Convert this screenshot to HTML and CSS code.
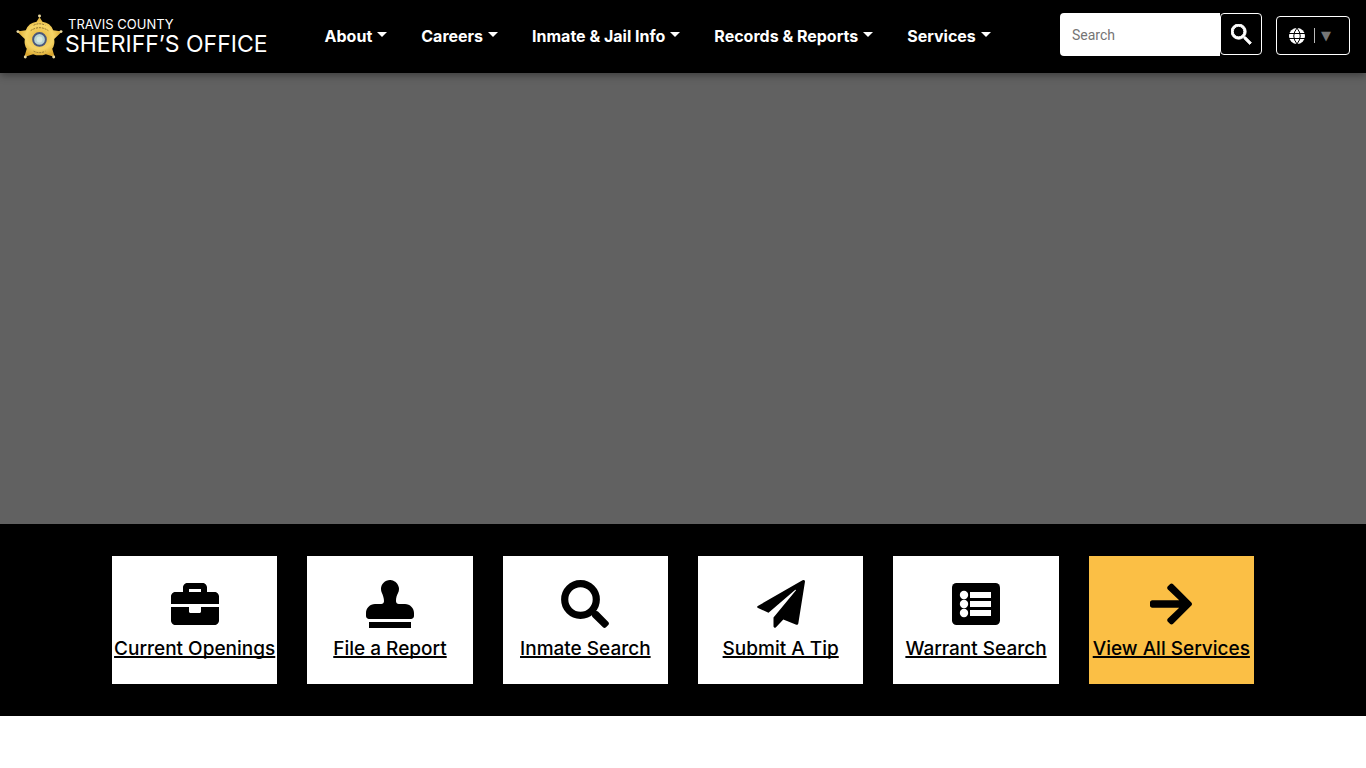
FILE: index.html
```html
<!DOCTYPE html>
<html lang="en">
<head>
  <meta charset="UTF-8">
  <title>Travis County Sheriff's Office</title>
  <meta name="viewport" content="width=device-width, initial-scale=1.0">
  <link rel="stylesheet" href="styles.css">
</head>
<body>
  <header class="site-header">
    <a href="#" class="brand">
      <svg class="badge" viewBox="0 0 48 48" aria-hidden="true">
        <defs>
          <radialGradient id="gold">
            <stop offset="0" stop-color="#e5b43a"/>
            <stop offset="0.6" stop-color="#f6d566"/>
            <stop offset="1" stop-color="#d9a62e"/>
          </radialGradient>
        </defs>
        <path fill="url(#gold)" d="M24 4l3 5q8 1 11 8.500l9 1.500-8 7.500q1 6-2 10l2.500 8.500-9-3q-6.500 2.500-13 0l-9 3L11 36.500q-3-4-2-10L1 19l9-1.500Q13 10 21 9z"/>
        <g fill="#ead9a0">
          <circle cx="24" cy="3" r="1.500"/><circle cx="46" cy="19" r="1.500"/><circle cx="38.500" cy="45" r="1.500"/>
          <circle cx="9.500" cy="45" r="1.500"/><circle cx="2" cy="19" r="1.500"/>
        </g>
        <path d="M18 12.500q6-3 12 0M15 18q9-6 18 0M18 39q6 3 12 0" fill="none" stroke="#8a7030" stroke-dasharray="2 1"/>
        <circle cx="24" cy="27" r="6.500" fill="#b8d4d2" stroke="#4a587c" stroke-width="2"/>
        <circle cx="24" cy="27" r="3" fill="#d8e8de"/>
      </svg>
      <span class="brand-text">
        <span class="brand-county">TRAVIS COUNTY</span>
        <span class="brand-office">SHERIFF’S OFFICE</span>
      </span>
    </a>

    <nav class="main-nav">
      <a href="#" class="nav-link">About</a>
      <a href="#" class="nav-link">Careers</a>
      <a href="#" class="nav-link">Inmate &amp; Jail Info</a>
      <a href="#" class="nav-link">Records &amp; Reports</a>
      <a href="#" class="nav-link">Services</a>
    </nav>

    <form class="search">
      <input type="search" class="search-input" placeholder="Search" aria-label="Search">
      <button type="submit" class="search-button" aria-label="Submit search">
        <svg viewBox="3 3 18 18" aria-hidden="true"><path d="M15.500 14h-.79l-.28-.27A6.471 6.471 0 0 0 16 9.500 6.500 6.500 0 1 0 9.500 16c1.610 0 3.090-.59 4.230-1.570l.27.28v.79l5 4.990L20.490 19l-4.990-5zm-6 0C7.010 14 5 11.990 5 9.500S7.010 5 9.500 5 14 7.010 14 9.500 11.990 14 9.500 14z"/></svg>
      </button>
    </form>

    <button type="button" class="language" aria-label="Select language">
      <svg viewBox="0 0 16 16" aria-hidden="true">
        <circle cx="8" cy="8" r="8" fill="#fff"/>
        <path d="M0 5.500h16M0 10.500h16M8 0Q1.500 8 8 16M8 0q6.500 8 0 16" fill="none" stroke="#000"/>
      </svg>
      <span class="language-arrow">▼</span>
    </button>
  </header>

  <main>
    <section class="hero"></section>

    <section class="quick-links">
      <div class="tiles">
        <a href="#" class="tile">
          <svg viewBox="0 0 512 512" aria-hidden="true"><path d="M320 336c0 8.840-7.160 16-16 16h-96c-8.840 0-16-7.160-16-16v-48H0v144c0 25.600 22.400 48 48 48h416c25.600 0 48-22.400 48-48V288H320v48zm144-208h-80V80c0-25.600-22.400-48-48-48H176c-25.600 0-48 22.400-48 48v48H48c-25.600 0-48 22.400-48 48v80h512v-80c0-25.600-22.400-48-48-48zm-144 0H192V96h128v32z"/></svg>
          <span>Current Openings</span>
        </a>
        <a href="#" class="tile">
          <svg viewBox="0 0 512 512" aria-hidden="true"><path d="M32 512h448v-64H32v64zm384-256h-66.560c-16.260 0-29.440-13.180-29.440-29.440v-9.460c0-27.370 8.880-53.410 21.460-77.720 9.110-17.610 12.900-38.390 9.050-60.420-6.770-38.780-38.470-70.700-77.260-77.450C212.620-9.040 160 37.330 160 96c0 14.160 3.120 27.540 8.690 39.580C182.020 164.430 192 194.700 192 226.490v.07c0 16.260-13.180 29.440-29.440 29.440H96c-53.020 0-96 42.980-96 96v32c0 17.670 14.330 32 32 32h448c17.670 0 32-14.330 32-32v-32c0-53.020-42.980-96-96-96z"/></svg>
          <span>File a Report</span>
        </a>
        <a href="#" class="tile">
          <svg viewBox="0 0 48 48" aria-hidden="true">
            <circle cx="19.500" cy="19.500" r="15.800" fill="none" stroke="#000" stroke-width="7.200"/>
            <path d="M30 32l2-2 3.500 1q1 0 1.500.5L47.300 42q1.300 1.500 0 3l-2.300 2.300q-1.500 1.300-3 0L31.500 37q-.5-.5-.5-1.500z"/>
          </svg>
          <span>Inmate Search</span>
        </a>
        <a href="#" class="tile">
          <svg viewBox="0 0 48 48" aria-hidden="true"><path d="M45.500.3L.8 26q-1.500 1.200.2 2l10.500 4.700L38 10q1.500-.8.800.6L16.500 37.500v9q.8 2.200 2.500.8l7.300-7.800 13 5.200q1.700.5 2-1.200L48 1.600q0-2.300-2.500-1.300z"/></svg>
          <span>Submit A Tip</span>
        </a>
        <a href="#" class="tile">
          <svg viewBox="0 0 48 48" aria-hidden="true">
            <rect y="3" width="48" height="42" rx="4.500"/>
            <g fill="#fff">
              <circle cx="12" cy="15" r="4.200"/><circle cx="12" cy="24" r="4.200"/><circle cx="12" cy="33" r="4.200"/>
              <rect x="18" y="12" width="21" height="6"/><rect x="18" y="21" width="21" height="6"/><rect x="18" y="30" width="21" height="6"/>
            </g>
          </svg>
          <span>Warrant Search</span>
        </a>
        <a href="#" class="tile tile-all">
          <svg viewBox="-32 0 512 512" aria-hidden="true"><path d="M190.500 66.900l22.200-22.200c9.400-9.400 24.600-9.400 33.900 0L441 239c9.400 9.400 9.400 24.600 0 33.900L246.600 467.300c-9.400 9.400-24.600 9.400-33.900 0l-22.200-22.200c-9.500-9.500-9.300-25 .4-34.300L311.400 296H24c-13.300 0-24-10.700-24-24v-32c0-13.300 10.700-24 24-24h287.400L190.900 101.200c-9.800-9.300-10-24.800-.4-34.300z"/></svg>
          <span>View All Services</span>
        </a>
      </div>
    </section>
  </main>
</body>
</html>
```
FILE: styles.css
```css
* {
  box-sizing: border-box;
}
body {
  margin: 0;
  background: #fff;
  font-family: Inter, "Liberation Sans", sans-serif;
  color: #000;
}

/* Header */
.site-header {
  position: relative;
  display: flex;
  align-items: center;
  min-height: 73px;
  padding: 0 16px 2px;
  background: #000;
  box-shadow: 0 2px 8px rgba(0, 0, 0, 0.4);
}
.brand {
  display: flex;
  align-items: center;
  gap: 2px;
  color: #fff;
  text-decoration: none;
}
.badge {
  width: 47px;
  height: 47px;
  margin-top: 2px;
}
.brand-text {
  display: flex;
  flex-direction: column;
  white-space: nowrap;
}
.brand-county {
  padding-left: 3px;
  font-size: 13px;
  line-height: 16px;
}
.brand-office {
  font-size: 23px;
  line-height: 24px;
}
.main-nav {
  display: flex;
  gap: 34px;
  margin-left: 57px;
}
.nav-link {
  display: flex;
  align-items: center;
  gap: 5px;
  color: #fff;
  font-size: 16px;
  font-weight: 700;
  line-height: 24px;
  text-decoration: none;
  white-space: nowrap;
}
.nav-link::after {
  content: "";
  margin-bottom: 3px;
  border-top: 5px solid #fff;
  border-left: 5px solid transparent;
  border-right: 5px solid transparent;
}

/* Search and language */
.search {
  display: flex;
  margin-left: auto;
  margin-bottom: 2px;
}
.search-input {
  width: 160px;
  height: 43px;
  padding: 0 12px;
  border: 0;
  border-radius: 4px 0 0 4px;
  background: #fff;
  font-family: Roboto, sans-serif;
  font-size: 14px;
}
.search-input::placeholder {
  color: #757575;
}
.search-button {
  display: flex;
  align-items: center;
  justify-content: center;
  width: 42px;
  height: 42px;
  padding: 0;
  border: 1px solid #fff;
  border-radius: 4px;
  background: #000;
}
.search-button svg {
  width: 21px;
  height: 21px;
  fill: #fff;
  stroke: #fff;
  stroke-width: 0.8;
}
.language {
  display: flex;
  align-items: center;
  gap: 9px;
  width: 74px;
  height: 39px;
  margin-left: 14px;
  padding: 0 12px;
  border: 1px solid #fff;
  border-radius: 4px;
  background: #000;
}
.language svg {
  width: 16px;
  height: 16px;
}
.language-arrow {
  padding-left: 6px;
  border-left: 1px solid #bbb;
  color: #767676;
  font-family: "DejaVu Sans", sans-serif;
  font-size: 13px;
  line-height: 15px;
}

/* Hero */
.hero {
  height: 451px;
  background: #616161;
}

/* Quick links */
.quick-links {
  padding: 32px 16px;
  background: #000;
}
.tiles {
  display: grid;
  grid-template-columns: repeat(6, 1fr);
  gap: 30px;
  max-width: 1142px;
  margin: 0 auto;
}
.tile {
  display: flex;
  flex-direction: column;
  align-items: center;
  gap: 8px;
  padding: 24px 0 22px;
  background: #fff;
  color: #000;
  font-size: 19px;
  font-weight: 500;
  line-height: 26px;
  text-decoration: underline;
  text-decoration-thickness: 2px;
  text-decoration-skip-ink: none;
  text-underline-offset: 1px;
  white-space: nowrap;
}
.tile svg {
  width: 48px;
  height: 48px;
}
.tile-all {
  background: #fbbf45;
}

@media (max-width: 1200px) {
  .site-header {
    flex-wrap: wrap;
    gap: 12px;
    padding: 12px 16px;
  }
  .main-nav {
    flex-wrap: wrap;
    margin-left: 0;
  }
  .tiles {
    grid-template-columns: repeat(3, 1fr);
  }
}
@media (max-width: 600px) {
  .tiles {
    grid-template-columns: 1fr;
  }
}
```
